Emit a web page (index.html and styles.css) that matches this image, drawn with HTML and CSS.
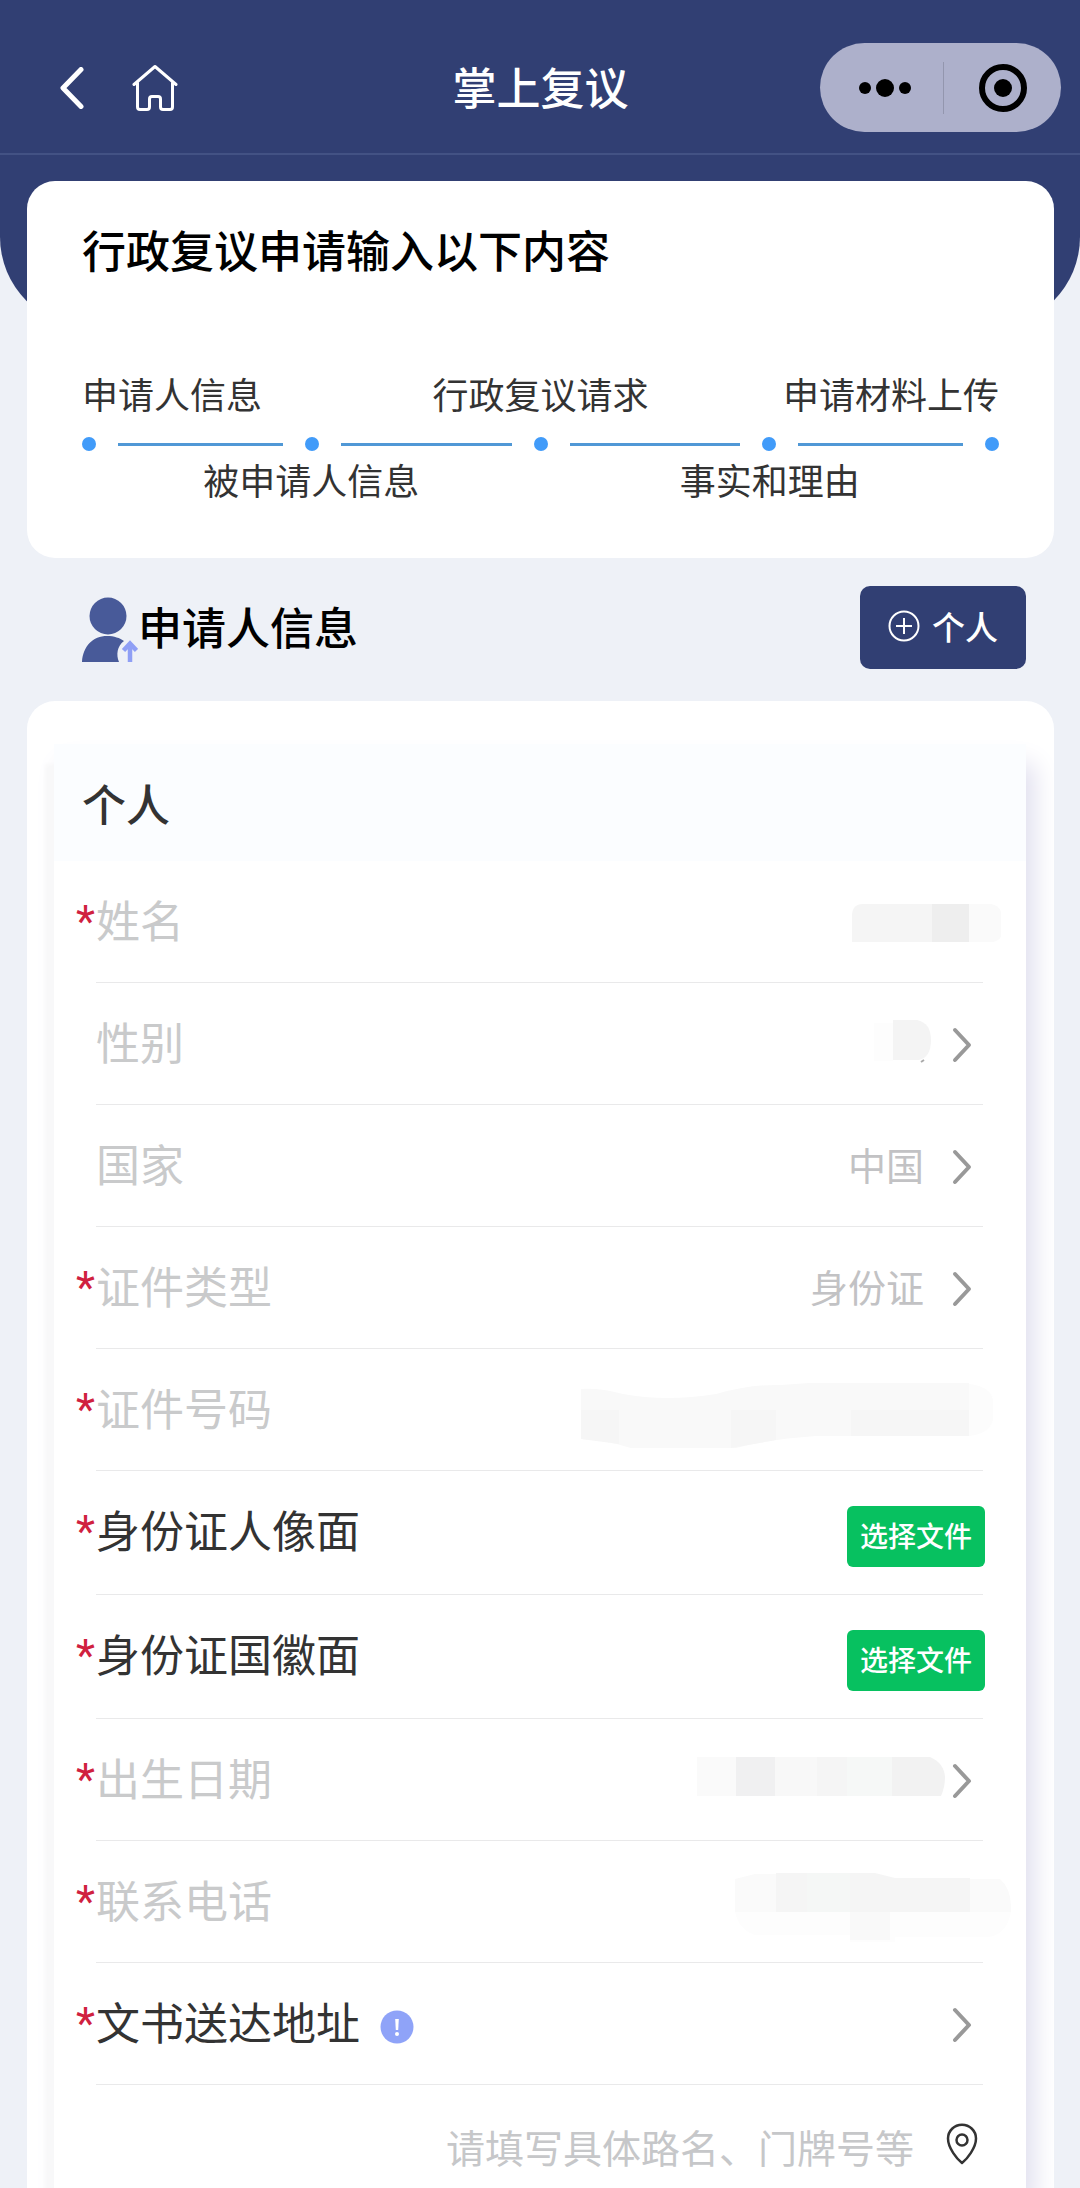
FILE: index.html
```html
<!DOCTYPE html>
<html lang="zh-CN">
<head>
<meta charset="utf-8">
<meta name="viewport" content="width=device-width, initial-scale=1">
<title>掌上复议</title>
<link rel="stylesheet" href="styles.css">
</head>
<body>
<div class="hero">
  <header class="navbar">
    <nav class="nav-links">
      <a class="nav-link" href="#" aria-label="返回">
        <svg width="24" height="42" viewBox="0 0 24 42"><path d="M21 2.500 3 21l18 18.500" fill="none" stroke="#fff" stroke-width="5" stroke-linecap="round" stroke-linejoin="round"/></svg>
      </a>
      <a class="nav-link" href="#" aria-label="首页">
        <svg width="46" height="46" viewBox="0 0 46 46"><path d="M2 19.500 L23 1.500 L44 19.500 M5.500 18 V42 Q5.500 44.500 8 44.500 H15 Q17.500 44.500 17.500 42 V34 Q17.500 31.500 20 31.500 H26 Q28.500 31.500 28.500 34 V42 Q28.500 44.500 31 44.500 H38 Q40.500 44.500 40.500 42 V18" fill="none" stroke="#fff" stroke-width="3" stroke-linecap="round" stroke-linejoin="round"/></svg>
      </a>
    </nav>
    <h1 class="nav-title">掌上复议</h1>
    <div class="capsule">
      <button class="capsule-btn capsule-more" type="button" aria-label="更多">
        <svg width="54" height="20" viewBox="0 0 54 20"><circle cx="7" cy="10" r="6"/><circle cx="27" cy="10" r="9"/><circle cx="47" cy="10" r="6"/></svg>
      </button>
      <button class="capsule-btn" type="button" aria-label="关闭">
        <svg width="48" height="48" viewBox="0 0 48 48"><circle cx="24" cy="24" r="21" fill="none" stroke="#000" stroke-width="6"/><circle cx="24" cy="24" r="9"/></svg>
      </button>
    </div>
  </header>
</div>

<main class="page">
  <section class="card steps">
    <h2 class="steps-title">行政复议申请输入以下内容</h2>
    <div class="labels labels-top">
      <span>申请人信息</span><span>行政复议请求</span><span class="label-end">申请材料上传</span>
    </div>
    <div class="track">
      <i class="dot"></i><i class="line"></i><i class="dot"></i><i class="line line-inner"></i><i class="dot"></i><i class="line line-inner"></i><i class="dot"></i><i class="line"></i><i class="dot"></i>
    </div>
    <div class="labels labels-bottom">
      <span>被申请人信息</span><span>事实和理由</span>
    </div>
  </section>

  <div class="section-head">
    <svg width="56" height="70" viewBox="0 -4 56 70">
      <circle cx="26" cy="19" r="18.500" fill="#485a99"/>
      <path d="M0 65 C1 49 11 39 25 39 C32 39 38 41 42 44 C35 49 34 58 37 65 Z" fill="#485a99"/>
      <path d="M48 65 V47 M41.500 53.500 L48 46.500 L54.500 53.500" fill="none" stroke="#8f9ff5" stroke-width="4.500"/>
    </svg>
    <h2 class="section-title">申请人信息</h2>
    <button class="add-btn" type="button">
      <svg width="32" height="32" viewBox="0 0 32 32"><path d="M16 8v16M8 16h16" stroke="#fff" stroke-width="2"/><circle cx="16" cy="16" r="14.500" fill="none" stroke="#fff" stroke-width="2"/></svg>
      个人
    </button>
  </div>

  <section class="card form-card">
    <form class="panel">
      <h3 class="panel-title">个人</h3>

      <div class="row">
        <span class="star">*</span>
        <div class="field">
          <span class="label muted">姓名</span>
          <svg class="masked masked-over" width="150" height="100" viewBox="0 0 150 100" role="img" aria-label="已隐藏">
            <path d="M12 32H81V70H1V44Q1 32 12 32Z" fill="#f5f5f5"/><path d="M81 32h37v38H81z" fill="#eee"/><path d="M118 32h22q11 2 11 14v14q0 8-9 10h-24z" fill="#fafafa"/>
          </svg>
        </div>
      </div>

      <div class="row">
        <span class="star"></span>
        <div class="field">
          <span class="label muted">性别</span>
          <button class="pick" type="button" aria-label="选择性别">
            <svg class="masked masked-wide-gap" width="58" height="100" viewBox="0 0 58 100">
              <path d="M0 29h19v38H0z" fill="#fdfdfd"/><path d="M19 26h24q14 3 14 20t-12 20H19z" fill="#f4f4f4"/><path d="m47 68 3-2" stroke="#aaa" stroke-width="2"/>
            </svg>
            <svg class="chevron" width="20" height="36" viewBox="0 0 20 36"><path d="m3 3 14 15L3 33"/></svg>
          </button>
        </div>
      </div>

      <div class="row">
        <span class="star"></span>
        <div class="field">
          <label class="label muted" for="country">国家</label>
          <select class="value" id="country"><option>中国</option></select>
          <svg class="chevron" width="20" height="36" viewBox="0 0 20 36"><path d="m3 3 14 15L3 33"/></svg>
        </div>
      </div>

      <div class="row">
        <span class="star">*</span>
        <div class="field">
          <label class="label muted" for="idtype">证件类型</label>
          <select class="value" id="idtype"><option>身份证</option></select>
          <svg class="chevron" width="20" height="36" viewBox="0 0 20 36"><path d="m3 3 14 15L3 33"/></svg>
        </div>
      </div>

      <div class="row">
        <span class="star">*</span>
        <div class="field">
          <span class="label muted">证件号码</span>
          <svg class="masked masked-id" width="412" height="100" viewBox="0 0 412 100" role="img" aria-label="已隐藏">
            <path d="M380 23 Q410 25 412 40 V60 Q408 74 388 76Z" fill="#fcfcfc"/>
            <path d="M0 29 Q20 28 42 34 Q85 42 135 34 Q170 24 200 25 L228 23 H388 V76 H235 Q190 79 155 88 H50 Q25 80 0 79Z" fill="#f9f9f9"/>
            <path d="M0 50h38v34L0 79zM150 50h45v30l-45 8zM270 50h118v26H270z" fill="#f6f6f6"/>
          </svg>
        </div>
      </div>

      <div class="row row-file">
        <span class="star">*</span>
        <div class="field">
          <label class="label" for="front">身份证人像面</label>
          <button class="file-btn" id="front" type="button">选择文件</button>
        </div>
      </div>

      <div class="row row-file">
        <span class="star">*</span>
        <div class="field">
          <label class="label" for="back">身份证国徽面</label>
          <button class="file-btn" id="back" type="button">选择文件</button>
        </div>
      </div>

      <div class="row">
        <span class="star">*</span>
        <div class="field">
          <span class="label muted">出生日期</span>
          <button class="pick" type="button" aria-label="选择出生日期">
            <svg class="masked" width="250" height="100" viewBox="0 0 250 100">
              <path d="M0 27h39v39H0z" fill="#fafafa"/><path d="M39 27h39v39H39z" fill="#f0f0f1"/><path d="M78 27h42v39H78z" fill="#f8f8f8"/><path d="M120 27h30v39h-30z" fill="#f5f5f5"/><path d="M150 27h45v39h-45z" fill="#f6f8f7"/><path d="M195 27h38q14 6 15 20 0 10-4 19h-49z" fill="#f2f2f2"/>
            </svg>
            <svg class="chevron" width="20" height="36" viewBox="0 0 20 36"><path d="m3 3 14 15L3 33"/></svg>
          </button>
        </div>
      </div>

      <div class="row">
        <span class="star">*</span>
        <div class="field">
          <span class="label muted">联系电话</span>
          <svg class="masked masked-phone" width="276" height="100" viewBox="0 0 276 100" role="img" aria-label="已隐藏">
            <path d="M0 60h276q-4 22-22 25h-94v5h-45v-7H20Q4 78 0 60z" fill="#fdfdfd"/>
            <path d="M0 27 20 22H41V60H0zM235 27h30q12 10 11 33h-41z" fill="#fafafa"/>
            <path d="M41 21H140L160 26H235V60H41z" fill="#f5f5f5"/><path d="M72 21h43v39H72z" fill="#f5f7f6"/><path d="M115 60h40v28h-40z" fill="#f9f9f9"/>
          </svg>
        </div>
      </div>

      <div class="row">
        <span class="star">*</span>
        <div class="field">
          <span class="label">文书送达地址</span>
          <svg class="info" width="34" height="34" viewBox="0 0 34 34" role="img" aria-label="说明"><circle cx="17" cy="17" r="16.500" fill="#8fa3f8"/><path d="M15.200 9h3.600l-.6 11h-2.400z" fill="#fff"/><circle cx="17" cy="24" r="2" fill="#fff"/></svg>
          <button class="pick" type="button" aria-label="选择地址">
            <svg class="chevron" width="20" height="36" viewBox="0 0 20 36"><path d="m3 3 14 15L3 33"/></svg>
          </button>
        </div>
      </div>

      <div class="row row-last">
        <span class="star"></span>
        <div class="field">
          <input class="address" type="text" aria-label="详细地址" placeholder="请填写具体路名、门牌号等">
          <button class="pin" type="button" aria-label="定位">
            <svg width="32" height="42" viewBox="0 0 32 42"><path d="M16 40 C11 36 2 25 2 15.500 A14 13.800 0 0 1 30 15.500 C30 25 21 36 16 40Z" fill="none" stroke="#333" stroke-width="2.500" stroke-linejoin="round"/><circle cx="16" cy="17" r="5.500" fill="none" stroke="#333" stroke-width="2.500"/></svg>
          </button>
        </div>
      </div>
    </form>
  </section>
</main>
</body>
</html>
```

FILE: styles.css
```css
* {
  box-sizing: border-box;
}

body {
  margin: 0;
  min-height: 100vh;
  display: flex;
  flex-direction: column;
  background: #eef1f7;
  color: #333;
  font-family: "Noto Sans CJK SC", "Noto Sans", sans-serif;
}

h1, h2, h3 {
  margin: 0;
}

svg {
  display: block;
  flex: none;
}

button, input, select {
  margin: 0;
  padding: 0;
  border: 0;
  background: none;
  color: inherit;
  font-family: inherit;
}

/* Navigation bar on its rounded blue backdrop */
.hero {
  padding-bottom: 172px;
  background: #313f73;
  border-radius: 0 0 90px 90px;
}

.navbar {
  display: grid;
  grid-template-columns: 1fr auto 1fr;
  align-items: center;
  height: 155px;
  padding: 22px 19px 0 60px;
  border-bottom: 2px solid #435284;
}

.nav-links {
  display: flex;
  align-items: center;
  gap: 48px;
}

.nav-title {
  margin-right: 40px;
  padding-bottom: 4px;
  color: #fff;
  font-size: 44px;
  font-weight: 500;
  line-height: 60px;
}

.capsule {
  display: flex;
  align-items: center;
  justify-self: end;
  width: 241px;
  height: 89px;
  border-radius: 45px;
  background: #adb0cb;
}

.capsule-btn {
  display: flex;
  flex: 1;
  align-items: center;
  justify-content: center;
  height: 52px;
}

.capsule-more {
  padding-left: 6px;
}

.capsule-btn + .capsule-btn {
  border-left: 1px solid #9396ae;
}

/* Cards */
.page {
  flex: 1;
  display: flex;
  flex-direction: column;
  margin-top: -146px;
  padding: 0 26px 0 27px;
}

.card {
  border-radius: 28px;
  background: #fff;
}

.steps {
  padding: 35px 55px 54px;
}

.steps-title {
  color: #000;
  font-size: 44px;
  font-weight: 500;
  line-height: 66px;
}

.labels {
  display: grid;
  font-size: 36px;
  line-height: 50px;
}

.labels-top {
  grid-template-columns: 1fr auto 1fr;
  margin-top: 86px;
}

.label-end {
  text-align: right;
}

.labels-bottom {
  grid-template-columns: 1fr 1fr;
  margin-top: 3px;
  text-align: center;
}

.track {
  display: flex;
  align-items: center;
  gap: 22px;
  margin-top: 19px;
}

.dot {
  width: 14px;
  height: 14px;
  border-radius: 50%;
  background: #419bf9;
}

.line {
  flex: 28;
  height: 3px;
  background: #5098d6;
}

.line-inner {
  flex: 29;
}

.section-head {
  display: flex;
  align-items: center;
  padding: 28px 28px 32px 55px;
}

.section-title {
  flex: 1;
  padding-bottom: 4px;
  color: #000;
  font-size: 44px;
  font-weight: 500;
  line-height: 66px;
}

.add-btn {
  display: flex;
  align-items: center;
  justify-content: center;
  gap: 12px;
  width: 166px;
  height: 83px;
  padding-bottom: 4px;
  border-radius: 10px;
  background: #313f73;
  color: #fff;
  font-size: 33px;
  font-weight: 500;
}

/* Applicant form */
.form-card {
  flex: 1;
  display: flex;
  padding: 43px 28px 0 27px;
  border-radius: 28px 28px 0 0;
  overflow: hidden;
}

.panel {
  flex: 1;
  min-width: 0;
  background: #fff;
  box-shadow: -9px 20px 4px #f8f8f9, 8px 20px 24px #dfdeee;
}

.panel-title {
  padding: 29px 28px 28px;
  background: #fbfdff;
  font-size: 44px;
  font-weight: 500;
  line-height: 60px;
}

.row {
  display: flex;
  align-items: stretch;
  height: 122px;
  padding: 0 43px 0 22px;
}

.star {
  width: 20px;
  color: #d0213f;
  font-family: Roboto, "Noto Sans CJK SC", sans-serif;
  font-size: 44px;
  line-height: 122px;
}

.field {
  display: flex;
  flex: 1;
  align-items: center;
  min-width: 0;
  border-bottom: 1px solid #e9e9ea;
}

.label {
  margin-right: auto;
  padding-bottom: 5px;
  font-size: 44px;
  line-height: 60px;
  white-space: nowrap;
}

.muted {
  color: #c9cacb;
}

.value {
  appearance: none;
  padding-bottom: 3px;
  color: #c2c2c4;
  font-size: 38px;
  line-height: 60px;
}

.chevron {
  margin: 2px 11px 0 27px;
  fill: none;
  stroke: #999;
  stroke-width: 4;
  stroke-linecap: round;
  stroke-linejoin: round;
}

.pick {
  display: flex;
  align-items: center;
}

.masked + .chevron {
  margin-left: 5px;
}

.masked-wide-gap + .chevron {
  margin-left: 20px;
}

.masked-over {
  margin-right: -18px;
}

.masked-id {
  margin-right: -10px;
}

.masked-phone {
  margin-right: -28px;
}

.row-file {
  height: 124px;
}

.row-file .field {
  align-items: flex-start;
  padding-top: 35px;
}

.row-file .label {
  line-height: 46px;
}

.file-btn {
  width: 138px;
  height: 61px;
  margin-right: -2px;
  padding-bottom: 4px;
  border-radius: 6px;
  background: #07c160;
  color: #fff;
  font-size: 28px;
  font-weight: 500;
}

.info {
  margin: 6px auto 0 20px;
}

.label:has(+ .info) {
  margin-right: 0;
}

.row-last {
  height: 103px;
}

.row-last .field {
  align-items: flex-start;
  padding-top: 31px;
  border-bottom: 0;
}

.address {
  flex: 1;
  min-width: 0;
  height: 60px;
  text-align: right;
  font-size: 39px;
}

.address::placeholder {
  color: #c6c7c9;
  opacity: 1;
}

.pin {
  margin: 7px 5px 0 32px;
}
```
